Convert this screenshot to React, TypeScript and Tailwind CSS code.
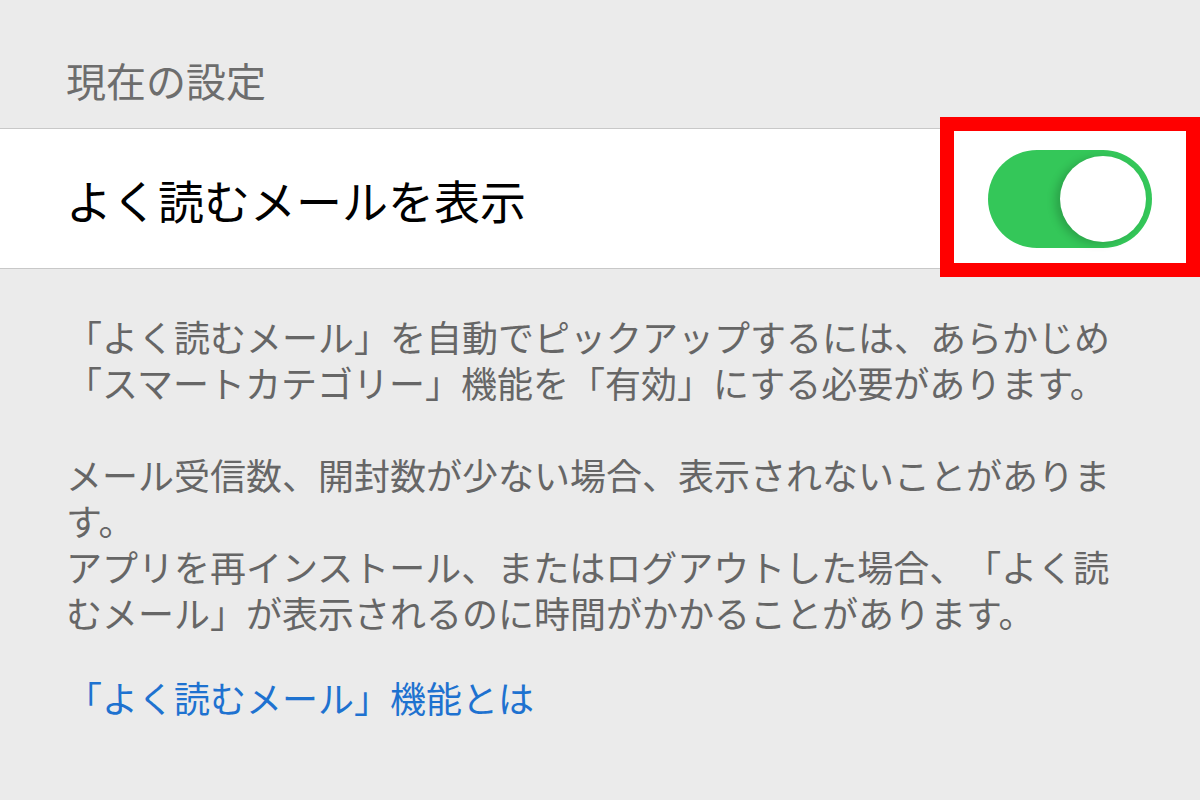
const jp = '[font-family:"Noto_Sans_CJK_JP","Noto_Sans",sans-serif]';

const Toggle = ({ on }: { on: boolean }) => (
  <div
    className={`relative flex h-[98px] w-[164px] items-center rounded-full p-[6px] ${
      on ? 'justify-end bg-[#34c759]' : 'justify-start bg-[#e5e5ea]'
    }`}
  >
    <div className="h-[86px] w-[86px] rounded-full bg-white shadow-[-5px_2px_8px_rgba(0,0,0,0.18)]" />
  </div>
);

export default function App() {
  return (
    <div
      className={`relative h-[800px] w-full overflow-hidden bg-[#ebebeb] ${jp} [text-spacing-trim:space-all]`}
    >
      {/* Section header */}
      <div className="h-[128px] px-[66px] pt-[56px]">
        <h2 className="text-[40px] leading-[48px] text-[#6d6d6d]">現在の設定</h2>
      </div>

      {/* Setting row */}
      <div className="flex h-[141px] items-center justify-between border-y border-[#c8c8c8] bg-white pl-[66px] pr-[48px]">
        <span className="text-[46px] leading-none text-black">よく読むメールを表示</span>
        <Toggle on />
      </div>

      {/* Notes */}
      <div className="w-[1200px] px-[66px] pt-[44px] text-[36px] leading-[46px] text-[#666666]">
        <p>
          「よく読むメール」を自動でピックアップするには、あらかじめ
          <br />
          「スマートカテゴリー」機能を「有効」にする必要があります。
        </p>
        <p className="mt-[46px]">
          メール受信数、開封数が少ない場合、表示されないことがあります。
          <br />
          アプリを再インストール、またはログアウトした場合、「よく読むメール」が表示されるのに時間がかかることがあります。
        </p>
        <a href="#" className="mt-[39px] block text-[#1e72d0]">
          「よく読むメール」機能とは
        </a>
      </div>

      {/* Highlight annotation */}
      <div className="absolute left-[940px] top-[117px] h-[160px] w-[260px] border-[14px] border-[#ff0000]" />
    </div>
  );
}
